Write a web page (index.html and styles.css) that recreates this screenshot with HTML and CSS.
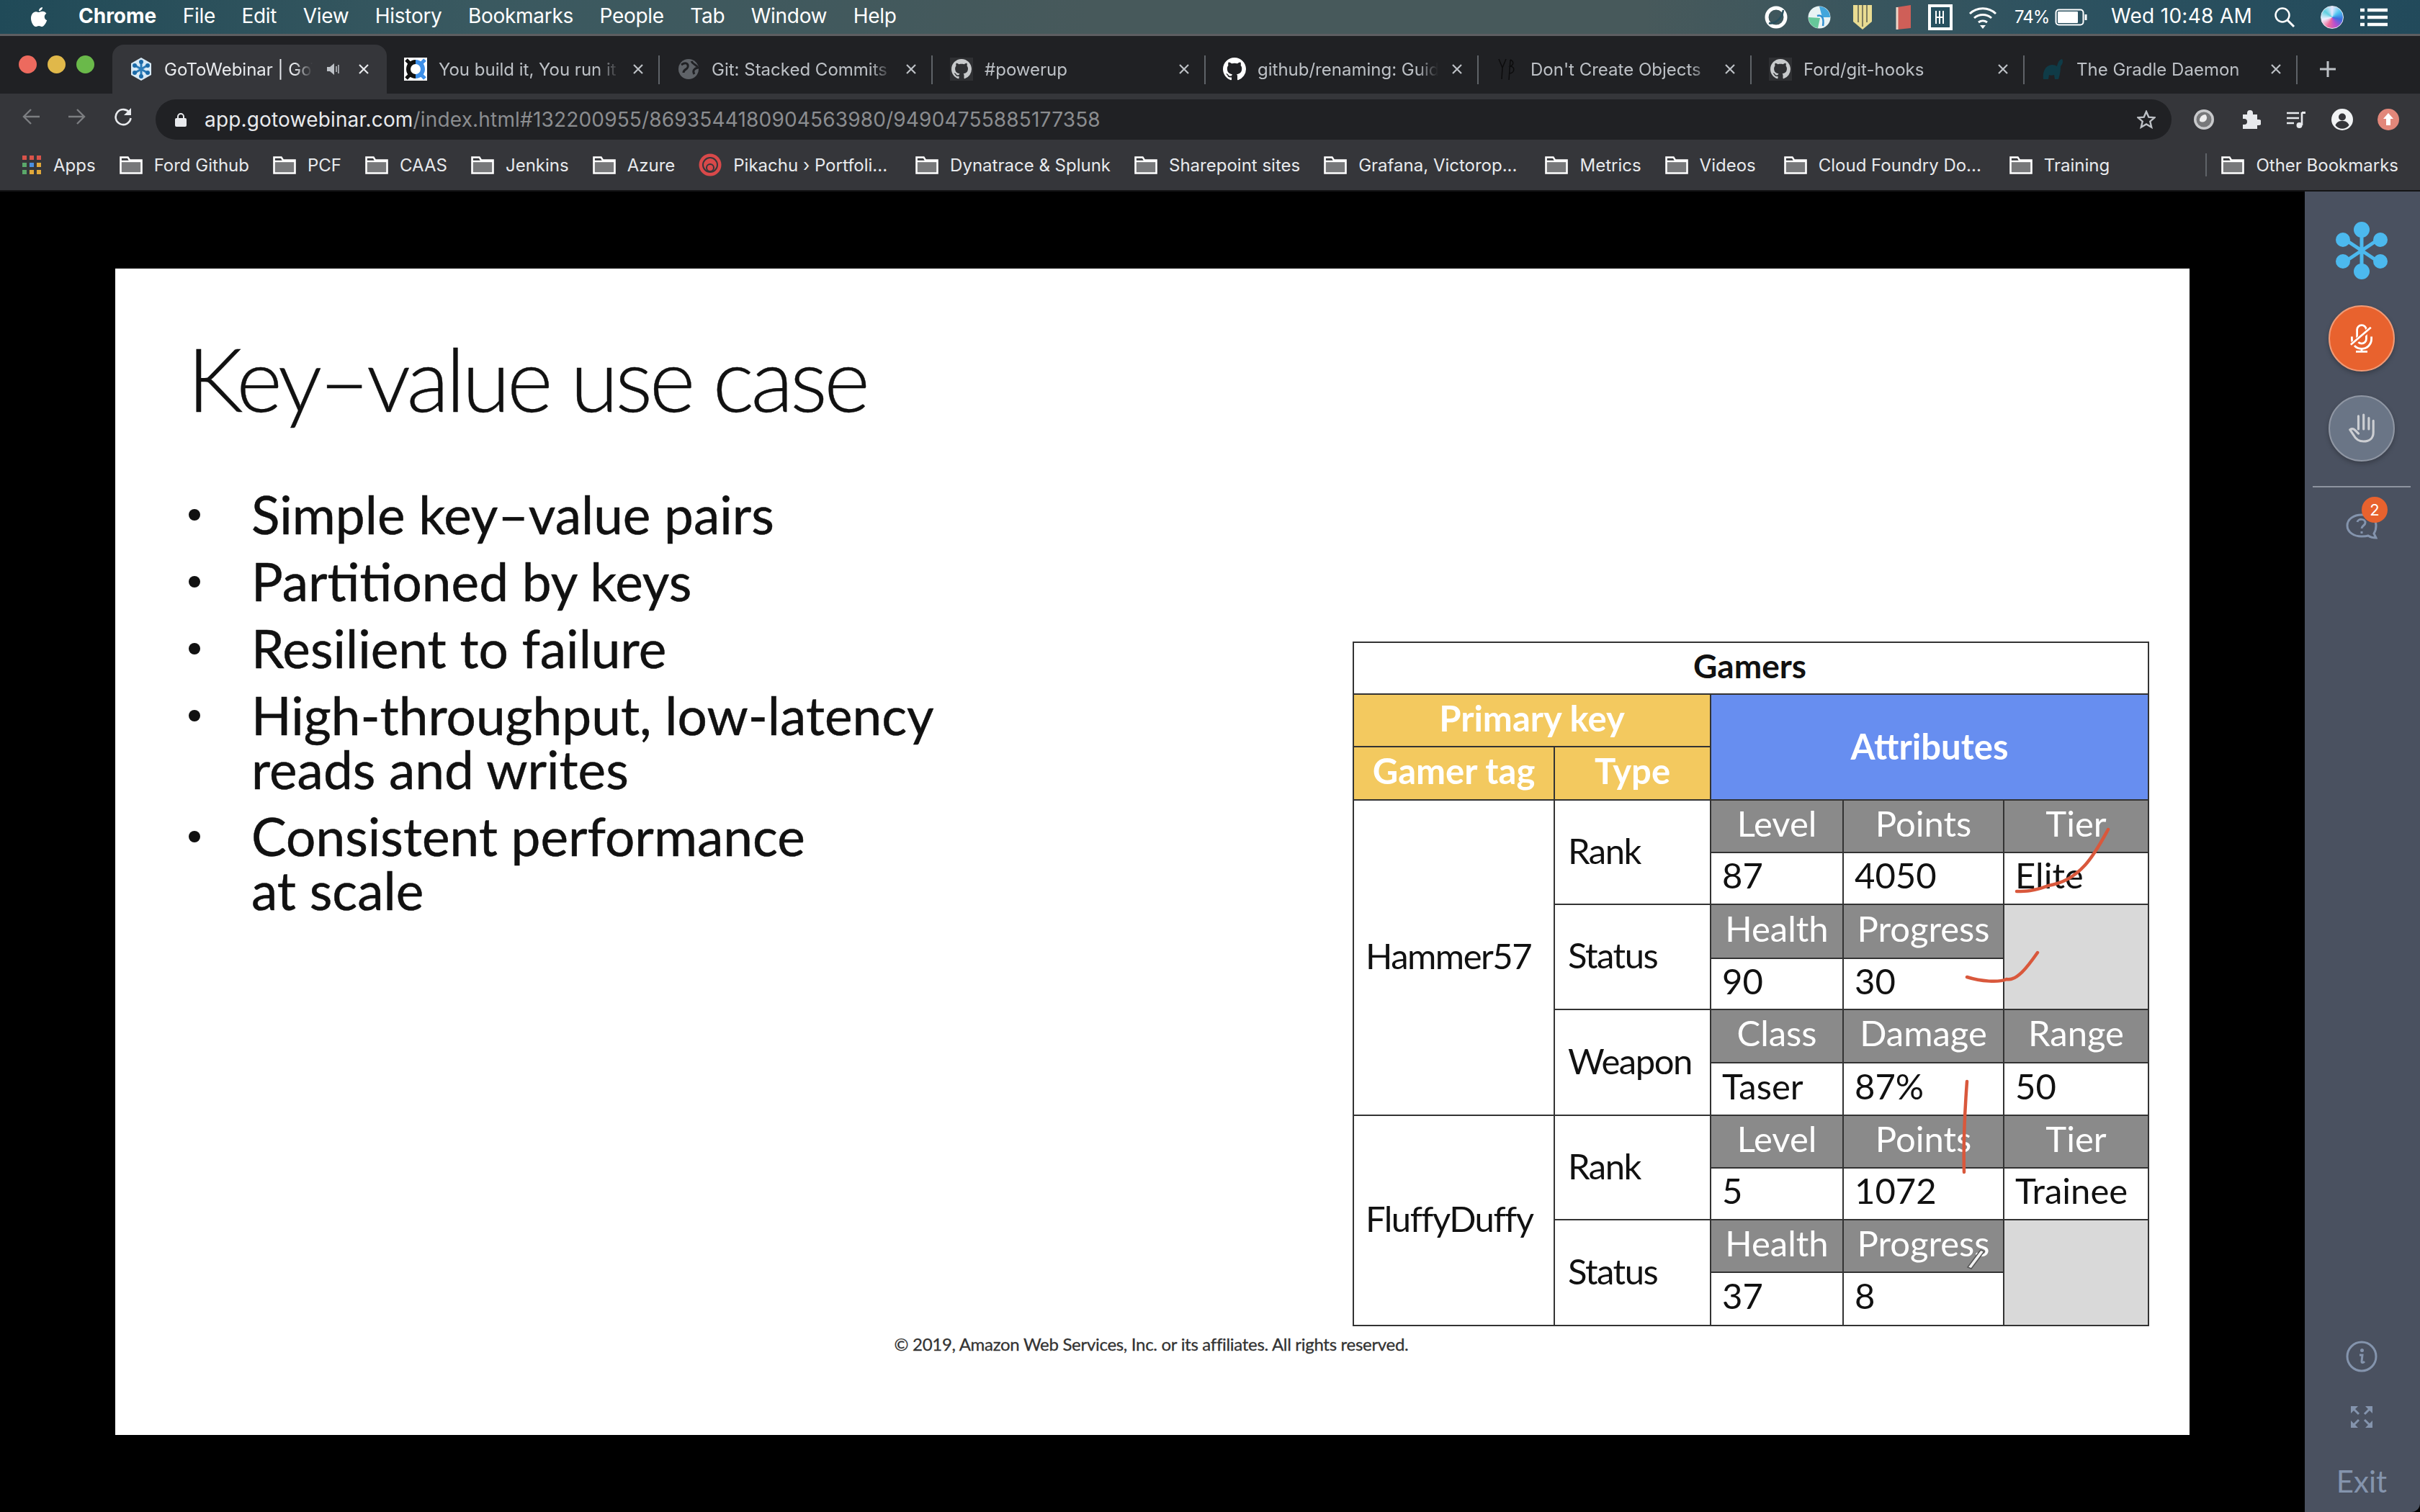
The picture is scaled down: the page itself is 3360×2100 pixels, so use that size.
FILE: index.html
```html
<!DOCTYPE html>
<html lang="en">
<head>
  <meta charset="UTF-8">
  <title>GoToWebinar</title>
  <link rel="stylesheet" href="styles.css">
</head>
<body>
  <svg class="defs" width="0" height="0">
    <symbol id="folder" viewBox="0 0 32 25">
      <path d="M1.500 23.500V1.500h10l2.500 4h16.500v18z" fill="#77787a" stroke="#fff" stroke-width="2.600"/>
      <path d="M3 3h8l1.500 3H3z" fill="#35363a"/>
      <path d="M2 7h28" stroke="#fff" stroke-width="2.400"/>
    </symbol>
    <symbol id="close" viewBox="0 0 16 16">
      <path d="M2 2l12 12M14 2L2 14" stroke="currentColor" stroke-width="2.200" fill="none"/>
    </symbol>
    <symbol id="github" viewBox="0 0 16 16">
      <path fill="currentColor" d="M8 0C3.580 0 0 3.580 0 8c0 3.540 2.290 6.530 5.470 7.590.4.070.55-.17.55-.38 0-.19-.01-.82-.01-1.490-2.010.37-2.530-.49-2.690-.94-.09-.23-.48-.94-.82-1.130-.28-.15-.68-.52-.01-.53.63-.01 1.080.58 1.230.82.72 1.210 1.870.87 2.330.66.07-.52.28-.87.51-1.070-1.780-.2-3.640-.89-3.640-3.950 0-.87.31-1.590.82-2.150-.08-.2-.36-1.020.08-2.120 0 0 .67-.21 2.200.82.64-.18 1.320-.27 2-.27s1.360.09 2 .27c1.530-1.040 2.200-.82 2.200-.82.44 1.100.16 1.920.08 2.120.51.56.82 1.270.82 2.150 0 3.070-1.870 3.750-3.650 3.950.29.25.54.73.54 1.480 0 1.070-.01 1.930-.01 2.200 0 .21.15.46.55.38A8.010 8.010 0 0 0 16 8c0-4.420-3.580-8-8-8z"/>
    </symbol>
  </svg>

  <div class="menubar">
    <svg class="apple" viewBox="0 0 24 30"><path fill="#fff" d="M17 1c.2 2.600-2.300 5.500-5 5.300C11.700 3.700 14.400 1.200 17 1zM12 8c1.300 0 2.800-1.200 5-1.200 2.200 0 4.200 1.100 5.400 3-3.900 2.300-3.300 7.900.8 9.500-1.200 3.200-4 8.700-6.800 8.700-1.700 0-2.400-1.100-4.400-1.100s-2.800 1.100-4.400 1.100C4.500 28 1 21.500 1 16.400 1 11 4.200 7.200 8 7.200c1.600 0 3 .8 4 .8z"/></svg>
    <nav class="menu">
      <b>Chrome</b><span>File</span><span>Edit</span><span>View</span><span>History</span><span>Bookmarks</span><span>People</span><span>Tab</span><span>Window</span><span>Help</span>
    </nav>
    <div class="status">
      <svg class="st" width="32" height="32" viewBox="0 0 32 32"><circle cx="16" cy="16" r="13" fill="none" stroke="#fff" stroke-width="5"/><path d="M6 24C12 26 24 20 26 6" fill="none" stroke="#27505f" stroke-width="2.500"/></svg>
      <svg class="st gap-30" width="32" height="32" viewBox="0 0 32 32"><circle cx="16" cy="16" r="15.500" fill="#e9f3f4"/><path d="M16 1a15 15 0 0 1 15 15H20z" fill="#43a6dc"/><path d="M1 16a15 15 0 0 0 13 15l3-14z" fill="#66c79a"/><path d="M13 14c6-2 10 2 8 14" fill="none" stroke="#2f8fd0" stroke-width="2.500"/></svg>
      <svg class="st gap-30" width="28" height="34" viewBox="0 0 28 34"><path d="M1 0h26v23L14 34 1 23z" fill="#e9dc92"/><path d="M8 0v24M14 0v30M20 0v24" stroke="#7f7d5e" stroke-width="2"/></svg>
      <svg class="st gap-23" width="24" height="38" viewBox="0 0 24 38"><path d="M4 5l19-3v32L4 36z" fill="#cf5f58"/><path d="M4 5v31" stroke="#ecd6c8" stroke-width="3"/></svg>
      <svg class="st gap-22" width="34" height="36" viewBox="0 0 34 36"><rect x="2" y="2" width="30" height="32" fill="#27505f" stroke="#fff" stroke-width="4"/><path d="M11 9v18M21 9v18M11 18h10M16 9v18" stroke="#fff" stroke-width="2"/></svg>
      <svg class="st gap-24" width="40" height="34" viewBox="0 0 40 34"><path d="M2 12a26 26 0 0 1 36 0M8 18a18 18 0 0 1 24 0M14 24a10 10 0 0 1 12 0" fill="none" stroke="#fff" stroke-width="3"/><path d="M16 28h8l-4 5z" fill="#fff"/></svg>
      <span class="pct">74%</span>
      <svg class="st battery" width="46" height="24" viewBox="0 0 46 24"><rect x="1.500" y="1.500" width="38" height="21" rx="4" fill="none" stroke="#fff" stroke-width="2"/><rect x="4" y="4" width="28" height="16" rx="1" fill="#fff"/><path d="M43 8v8" stroke="#fff" stroke-width="3"/></svg>
      <span class="clock">Wed 10:48 AM</span>
      <svg class="st gap-35" width="30" height="30" viewBox="0 0 30 30"><circle cx="12" cy="12" r="9.500" fill="none" stroke="#fff" stroke-width="2.500"/><path d="M19 19l9 9" stroke="#fff" stroke-width="3"/></svg>
      <span class="siri"></span>
      <svg class="st last" width="38" height="26" viewBox="0 0 38 26"><path d="M0 3h6M10 3h28M0 13h6M10 13h28M0 23h6M10 23h28" stroke="#fff" stroke-width="4.500"/></svg>
    </div>
  </div>

  <div class="window">
    <div class="tabstrip">
      <div class="lights"><i class="red"></i><i class="yellow"></i><i class="green"></i></div>
      <div class="tab active">
        <svg class="favicon" viewBox="0 0 32 32"><path d="M16 0l14 8v16l-14 8-14-8V8z" fill="#d7e9f5"/><path d="M16 5v22M6 10l20 12M26 10L6 22" stroke="#2c7cb8" stroke-width="3"/><g fill="#1b6aa8"><circle cx="16" cy="6" r="3"/><circle cx="16" cy="26" r="3"/><circle cx="7" cy="11" r="3"/><circle cx="25" cy="11" r="3"/><circle cx="7" cy="21" r="3"/><circle cx="25" cy="21" r="3"/></g></svg>
        <span class="tab-title short">GoToWebinar | GoT</span>
        <svg class="speaker" viewBox="0 0 20 20"><path d="M1 7h4l6-5v16l-6-5H1z" fill="#bdc1c6"/><path d="M14 6v8M17 4v12" stroke="#bdc1c6" stroke-width="1.500"/></svg>
        <svg class="tab-x"><use href="#close"/></svg>
      </div>
      <div class="tab">
        <svg class="favicon" viewBox="0 0 32 32"><rect width="32" height="32" fill="#fff"/><path d="M16 3a13 13 0 0 0 0 26v-6a7 7 0 0 1 0-14z" fill="#111"/><path d="M16 3a13 13 0 0 1 0 26v-6a7 7 0 0 0 0-14z" fill="#3d8fe8"/><path d="M3 3l5 5M3 29l5-5" stroke="#111" stroke-width="5"/><path d="M29 3l-5 5M29 29l-5-5" stroke="#3d8fe8" stroke-width="5"/></svg>
        <span class="tab-title">You build it, You run it</span>
        <svg class="tab-x"><use href="#close"/></svg>
      </div>
      <div class="tab">
        <svg class="favicon" viewBox="0 0 32 32"><circle cx="16" cy="16" r="14" fill="#5f6368"/><path d="M6 10c6-4 10-2 9 3-1 4-6 3-6 8M20 5c2 5 8 5 9 9-5 1-8 4-5 9" fill="none" stroke="#202124" stroke-width="3"/></svg>
        <span class="tab-title">Git: Stacked Commits</span>
        <svg class="tab-x"><use href="#close"/></svg>
      </div>
      <div class="tab">
        <span class="favicon gh-box"><svg><use href="#github"/></svg></span>
        <span class="tab-title">#powerup</span>
        <svg class="tab-x"><use href="#close"/></svg>
      </div>
      <div class="tab">
        <svg class="favicon gh-white"><use href="#github"/></svg>
        <span class="tab-title">github/renaming: Guid</span>
        <svg class="tab-x"><use href="#close"/></svg>
      </div>
      <div class="tab">
        <svg class="favicon" viewBox="0 0 32 32"><path d="M4 2l5 12 5-12M9 14l-1 16M20 3c5 2 5 7 0 9 7 1 6 9-1 10M20 3l-2 28" fill="none" stroke="#0c0c0d" stroke-width="1.500"/></svg>
        <span class="tab-title">Don't Create Objects</span>
        <svg class="tab-x"><use href="#close"/></svg>
      </div>
      <div class="tab">
        <span class="favicon gh-box"><svg><use href="#github"/></svg></span>
        <span class="tab-title">Ford/git-hooks</span>
        <svg class="tab-x"><use href="#close"/></svg>
      </div>
      <div class="tab">
        <svg class="favicon" viewBox="0 0 32 32"><path d="M2 30c-1-8 1-16 8-19 4-2 8-1 11 1 1-5 3-9 7-10 2 3 1 7-2 10 0 6-1 12-3 18h-5l-1-6c-3 1-5 1-7 0l-1 6z" fill="#0f3b47"/></svg>
        <span class="tab-title">The Gradle Daemon</span>
        <svg class="tab-x"><use href="#close"/></svg>
      </div>
      <svg class="newtab" viewBox="0 0 24 24"><path d="M12 1v22M1 12h22" stroke="#bdc1c6" stroke-width="3"/></svg>
    </div>

    <div class="toolbar">
      <svg class="nav" viewBox="0 0 26 26"><path d="M25 13H3M13 3L3 13l10 10" fill="none" stroke="#7c7e81" stroke-width="2.400"/></svg>
      <svg class="nav" viewBox="0 0 26 26"><path d="M1 13h22M13 3l10 10-10 10" fill="none" stroke="#7c7e81" stroke-width="2.400"/></svg>
      <svg class="nav" viewBox="0 0 26 26"><path d="M22 8a10.500 10.500 0 1 0 1.500 7" fill="none" stroke="#e8eaed" stroke-width="2.600"/><path d="M24 1v10H14z" fill="#e8eaed"/></svg>
      <div class="omnibox">
        <svg class="lock" viewBox="0 0 16 20"><path d="M4 9V6a4 4 0 0 1 8 0v3" fill="none" stroke="#e8eaed" stroke-width="2"/><rect y="8" width="16" height="12" rx="2" fill="#e8eaed"/></svg>
        <span class="url"><span class="host">app.gotowebinar.com</span>/index.html#132200955/8693544180904563980/94904755885177358</span>
        <svg class="star" viewBox="0 0 26 26"><path d="M13 2l3.300 7.600 8.200.7-6.200 5.400 1.900 8L13 19.500 5.800 23.700l1.900-8L1.500 10.300l8.200-.7z" fill="none" stroke="#bdc1c6" stroke-width="2.400"/></svg>
      </div>
      <div class="extensions">
        <svg class="ext" viewBox="0 0 30 30"><circle cx="15" cy="15" r="14" fill="#c8c9cb"/><circle cx="15" cy="15" r="10.500" fill="#77787a"/><path d="M9 17a8 8 0 0 1 8-9 6 6 0 0 1-8 9z" fill="#eee"/></svg>
        <svg class="ext" viewBox="0 0 30 30"><path d="M5 8h6V6a4 4 0 0 1 8 0v2h6v7h2a4 4 0 0 1 0 8h-2v5H5v-6h2a4 4 0 0 0 0-8H5z" fill="#e8eaed"/></svg>
        <svg class="ext" viewBox="0 0 30 30"><path d="M2 6h17M2 13h17M2 20h10" stroke="#e8eaed" stroke-width="2.600"/><path d="M23 5v18" stroke="#e8eaed" stroke-width="2.600"/><path d="M23 4h5v3h-5z" fill="#e8eaed"/><circle cx="19.500" cy="23" r="4" fill="#e8eaed"/></svg>
        <svg class="ext" viewBox="0 0 30 30"><circle cx="15" cy="15" r="15" fill="#f1f3f4"/><circle cx="15" cy="11.500" r="5" fill="#35363a"/><path d="M5.500 23c2-5 5-6 9.500-6s7.500 1 9.500 6a12 12 0 0 1-19 0z" fill="#35363a"/></svg>
        <svg class="ext" viewBox="0 0 30 30"><circle cx="15" cy="15" r="15" fill="#e2877a"/><path d="M15 6l7 8h-4v9h-6v-9H8z" fill="#fff"/></svg>
      </div>
    </div>

    <div class="bookmarks">
      <div class="bm">
        <span class="apps"><i></i><i></i><i></i><i></i><i></i><i></i><i></i><i></i><i></i></span>
        <span>Apps</span>
      </div>
      <div class="bm"><svg class="folder"><use href="#folder"/></svg><span>Ford Github</span></div>
      <div class="bm"><svg class="folder"><use href="#folder"/></svg><span>PCF</span></div>
      <div class="bm"><svg class="folder"><use href="#folder"/></svg><span>CAAS</span></div>
      <div class="bm"><svg class="folder"><use href="#folder"/></svg><span>Jenkins</span></div>
      <div class="bm"><svg class="folder"><use href="#folder"/></svg><span>Azure</span></div>
      <div class="bm wide-after">
        <svg class="pika" viewBox="0 0 32 32"><circle cx="16" cy="16" r="15.500" fill="#d9494a"/><circle cx="16" cy="16" r="10" fill="none" stroke="#35363a" stroke-width="2"/><circle cx="16" cy="20" r="5" fill="none" stroke="#35363a" stroke-width="2"/></svg>
        <span>Pikachu › Portfoli...</span>
      </div>
      <div class="bm"><svg class="folder"><use href="#folder"/></svg><span>Dynatrace &amp; Splunk</span></div>
      <div class="bm"><svg class="folder"><use href="#folder"/></svg><span>Sharepoint sites</span></div>
      <div class="bm wide-after"><svg class="folder"><use href="#folder"/></svg><span>Grafana, Victorop...</span></div>
      <div class="bm"><svg class="folder"><use href="#folder"/></svg><span>Metrics</span></div>
      <div class="bm wide-after"><svg class="folder"><use href="#folder"/></svg><span>Videos</span></div>
      <div class="bm wide-after"><svg class="folder"><use href="#folder"/></svg><span>Cloud Foundry Do...</span></div>
      <div class="bm"><svg class="folder"><use href="#folder"/></svg><span>Training</span></div>
      <div class="bm other"><svg class="folder"><use href="#folder"/></svg><span>Other Bookmarks</span></div>
    </div>

    <div class="content">
      <div class="stage">
        <div class="slide">
          <div class="slide-main">
            <div class="slide-text">
              <h1>Key–value use case</h1>
              <ul>
                <li><span>Simple key–value pairs</span></li>
                <li><span>Partitioned by keys</span></li>
                <li><span>Resilient to failure</span></li>
                <li><span>High-throughput, low-latency<br>reads and writes</span></li>
                <li><span>Consistent performance<br>at scale</span></li>
              </ul>
            </div>
            <div class="gamers">
              <div class="cell title-cell">Gamers</div>
              <div class="cell key pk">Primary key</div>
              <div class="cell attrs">Attributes</div>
              <div class="cell key">Gamer tag</div>
              <div class="cell key">Type</div>

              <div class="cell name hammer">Hammer57</div>
              <div class="cell kind">Rank</div>
              <div class="cell head">Level</div><div class="cell head">Points</div><div class="cell head">Tier</div>
              <div class="cell val">87</div><div class="cell val">4050</div><div class="cell val">Elite</div>
              <div class="cell kind">Status</div>
              <div class="cell head">Health</div><div class="cell head">Progress</div><div class="cell blank"></div>
              <div class="cell val">90</div><div class="cell val">30</div>
              <div class="cell kind">Weapon</div>
              <div class="cell head">Class</div><div class="cell head">Damage</div><div class="cell head">Range</div>
              <div class="cell val">Taser</div><div class="cell val">87%</div><div class="cell val">50</div>

              <div class="cell name fluffy">FluffyDuffy</div>
              <div class="cell kind">Rank</div>
              <div class="cell head">Level</div><div class="cell head">Points</div><div class="cell head">Tier</div>
              <div class="cell val">5</div><div class="cell val">1072</div><div class="cell val">Trainee</div>
              <div class="cell kind">Status</div>
              <div class="cell head">Health</div><div class="cell head">Progress</div><div class="cell blank"></div>
              <div class="cell val">37</div><div class="cell val">8</div>

              <!-- presenter's ink on top of the slide -->
              <svg class="ink" viewBox="0 0 1106 949">
                <path d="M1047 259C1030 290 1010 330 964 337C945 345 930 345 920 345"/>
                <path d="M949 430C935 450 920 470 906 467C895 472 870 470 851 464"/>
                <path d="M851 609C848 650 846 700 847 735"/>
                <path d="M870 843l-18 24 5 2 18-24z" class="pencil"/>
              </svg>
            </div>
          </div>
          <p class="copyright">© 2019, Amazon Web Services, Inc. or its affiliates. All rights reserved.</p>
        </div>
      </div>

      <aside class="sidebar">
        <svg class="logo" viewBox="0 0 72 80"><g stroke="#4cb9ee" stroke-width="5"><path d="M36 12v56M12 24l48 32M60 24L12 56"/></g><g fill="#4cb9ee"><circle cx="36" cy="11" r="11"/><circle cx="36" cy="69" r="11"/><circle cx="10" cy="25" r="10"/><circle cx="62" cy="25" r="10"/><circle cx="10" cy="55" r="10"/><circle cx="62" cy="55" r="10"/></g></svg>
        <div class="round mic">
          <svg viewBox="0 0 40 50"><g fill="none" stroke="#fff" stroke-width="3.500"><path d="M12 26V10a8 8 0 0 1 16 0v16a8 8 0 0 1-16 0z"/><path d="M3 22v4a17 17 0 0 0 34 0v-4"/><path d="M20 43v5M10 48h20"/></g><path d="M2 37L37 6" stroke="#e8622e" stroke-width="8"/><path d="M1 36L36 6" stroke="#fff" stroke-width="3.500"/></svg>
        </div>
        <div class="round hand">
          <svg viewBox="0 0 40 46"><path d="M15 24V4M23 24V2M31 24V7M38 24v-13v18c0 9-6 14-15 14-7 0-12-3-15-9l-6-9c3-2 6-1 8 1l5 5" fill="none" stroke="#ccced2" stroke-width="3.500" stroke-linecap="round" stroke-linejoin="round"/></svg>
        </div>
        <hr class="divider">
        <div class="qa">
          <svg viewBox="0 0 44 40"><path d="M22 2C11 2 2 8 2 17s9 15 20 15c3 0 6 0 9-1 3 2 7 3 11 3l-3-6c2-3 3-6 3-11C42 8 33 2 22 2z" fill="none" stroke="#8494ad" stroke-width="3"/><path d="M16 12c1-5 11-5 11 1 0 4-5 4-5 8M22 25v3" fill="none" stroke="#8494ad" stroke-width="3"/></svg>
          <span class="badge">2</span>
        </div>
        <svg class="info" viewBox="0 0 44 44"><circle cx="22" cy="22" r="20" fill="none" stroke="#8494ad" stroke-width="3"/><circle cx="22.500" cy="13.500" r="2.500" fill="#8494ad"/><path d="M19 20h4l-1 9c0 2 2 2 4 0" fill="none" stroke="#8494ad" stroke-width="3"/></svg>
        <svg class="expand" viewBox="0 0 30 30"><g fill="#8494ad"><path d="M0 0h10L0 10zM30 0v10L20 0zM0 30V20l10 10zM30 30H20l10-10z"/></g><path d="M3 3l8 8M27 3l-8 8M3 27l8-8M27 27l-8-8" stroke="#8494ad" stroke-width="3"/></svg>
        <span class="exit">Exit</span>
      </aside>
    </div>
  </div>
</body>
</html>
```

FILE: styles.css
```css
* {
  box-sizing: border-box;
}

html, body {
  margin: 0;
  padding: 0;
  width: 3360px;
  height: 2100px;
  overflow: hidden;
  background: #000;
  font-family: Inter, Roboto, "Liberation Sans", sans-serif;
}

.defs {
  position: absolute;
}

/* mac menu bar */
.menubar {
  height: 47px;
  display: flex;
  align-items: center;
  padding-left: 42px;
  color: #fff;
  font-size: 28px;
  background: linear-gradient(90deg, #204a58 0%, #3a5960 20%, #47595b 45%, #47595b 68%, #2d5260 85%, #224a5b 100%);
}

.apple {
  width: 24px;
  height: 30px;
  margin-right: 43px;
}

.menu {
  display: flex;
  gap: 36.500px;
  padding-bottom: 3px;
}

.menu span {
  letter-spacing: -0.300px;
}

.menu b {
  font-weight: 700;
}

.status {
  margin-left: auto;
  display: flex;
  align-items: center;
  height: 47px;
  padding-right: 45px;
}

.st {
  flex: none;
  margin-right: 28px;
}

.gap-22 { margin-right: 22px; }
.gap-23 { margin-right: 23px; }
.gap-24 { margin-right: 24px; }
.gap-30 { margin-right: 30px; }
.gap-35 { margin-right: 35px; }

.st.last {
  margin-right: 0;
}

.pct {
  width: 46px;
  font-size: 24px;
  letter-spacing: -1px;
  white-space: nowrap;
  margin-right: 10px;
}

.battery {
  margin-right: 32px;
}

.clock {
  width: 188px;
  white-space: nowrap;
  letter-spacing: 0.300px;
  margin-right: 38px;
  padding-bottom: 3px;
}

.siri {
  width: 32px;
  height: 32px;
  margin-right: 23px;
  border-radius: 50%;
  border: 1px solid #e8e8f0;
  background: conic-gradient(#e8e8ff, #52c8f0, #3b6fe0, #b44fd0, #f06a9a, #f0f0ff, #5fd0e0, #e8e8ff);
}

/* browser window */
.window {
  height: 2053px;
  display: flex;
  flex-direction: column;
  border-top: 3px solid #5d5e61;
  background: #000;
}

.tabstrip {
  height: 80px;
  padding-top: 12px;
  display: flex;
  background: #202124;
  color: #bdc1c6;
  font-size: 24px;
}

.lights {
  width: 156px;
  display: flex;
  align-items: center;
  gap: 15px;
  padding: 0 0 14px 26px;
}

.lights i {
  width: 25px;
  height: 25px;
  border-radius: 50%;
}

.lights .red { background: #ed6a5e; }
.lights .yellow { background: #e0b84a; }
.lights .green { background: #6ab94a; }

.tab {
  flex: none;
  width: 379px;
  height: 68px;
  position: relative;
  display: flex;
  align-items: center;
  padding: 0 22px 0 24px;
}

.tab::after {
  content: "";
  position: absolute;
  right: 0;
  top: 15px;
  height: 40px;
  border-right: 2px solid #5f6368;
}

.tab.active {
  width: 381px;
  background: #35363a;
  color: #e8eaed;
  border-radius: 16px 16px 0 0;
}

.tab.active::after {
  display: none;
}

.favicon {
  flex: none;
  width: 32px;
  height: 32px;
  margin-right: 16px;
}

.gh-white {
  color: #fff;
}

.gh-box {
  display: flex;
  align-items: center;
  justify-content: center;
  background: #2f3033;
  color: #c8cacc;
}

.gh-box svg {
  width: 28px;
  height: 28px;
}

.tab-title {
  flex: 1;
  min-width: 0;
  white-space: nowrap;
  overflow: hidden;
  -webkit-mask-image: linear-gradient(90deg, #000 88%, transparent 100%);
  mask-image: linear-gradient(90deg, #000 88%, transparent 100%);
}

.tab-title.short {
  flex: none;
  width: 206px;
}

.speaker {
  width: 20px;
  height: 20px;
  margin-left: 19px;
}

.tab-x {
  flex: none;
  width: 16px;
  height: 16px;
  margin-left: 18px;
}

.tab.active .speaker + .tab-x {
  margin-left: 24px;
}

.newtab {
  width: 24px;
  height: 24px;
  margin: 22px 0 0 30px;
}

.toolbar {
  height: 64px;
  background: #35363a;
  display: flex;
  align-items: center;
  padding-left: 30px;
}

.nav {
  flex: none;
  width: 26px;
  height: 26px;
  margin-right: 38px;
}

.omnibox {
  flex: none;
  width: 2799px;
  height: 56px;
  margin: 8px 0 0 -6px;
  border-radius: 28px;
  background: #202124;
  display: flex;
  align-items: center;
  padding: 0 22px 0 27px;
  color: #8b8d90;
  font-size: 28px;
}

.lock {
  width: 16px;
  height: 20px;
  margin-right: 25px;
}

.url {
  letter-spacing: 0.170px;
}

.host {
  color: #e8eaed;
}

.star {
  width: 26px;
  height: 26px;
  margin-left: auto;
}

.extensions {
  display: flex;
  align-items: center;
  gap: 34px;
  margin: 8px 0 0 30px;
}

.ext {
  width: 30px;
  height: 30px;
}

.bookmarks {
  height: 72px;
  background: #35363a;
  border-bottom: 2px solid #141416;
  display: flex;
  align-items: center;
  padding-left: 31px;
  gap: 33px;
  color: #e8eaed;
  font-size: 24px;
}

.bm {
  display: flex;
  align-items: center;
  gap: 16px;
  white-space: nowrap;
}

.bm.wide-after {
  margin-right: 6px;
}

.folder {
  width: 32px;
  height: 25px;
}

.apps {
  width: 26px;
  height: 26px;
  margin-right: 1px;
  display: grid;
  grid-template-columns: repeat(3, 6px);
  grid-template-rows: repeat(3, 6px);
  gap: 4px;
}

.apps i:nth-child(1), .apps i:nth-child(2), .apps i:nth-child(3) { background: #d9534a; }
.apps i:nth-child(4) { background: #5aa86a; }
.apps i:nth-child(5) { background: #4a8fe0; }
.apps i:nth-child(6) { background: #e0a83a; }
.apps i:nth-child(7) { background: #5aa86a; }
.apps i:nth-child(8), .apps i:nth-child(9) { background: #e0a83a; }

.pika {
  width: 32px;
  height: 32px;
}

.other {
  margin-left: auto;
  margin-right: 30px;
  padding-left: 20px;
  height: 32px;
  border-left: 2px solid #5f6368;
}

/* webinar viewer */
.content {
  flex: 1;
  min-height: 0;
  display: flex;
}

.stage {
  flex: 1;
  padding: 107px 0 0 160px;
  background: #000;
}

.slide {
  width: 2880px;
  height: 1620px;
  background: #fff;
  color: #111;
  font-family: Lato, "Noto Sans", sans-serif;
  padding: 0 56px 0 101px;
  display: flex;
  flex-direction: column;
}

.slide-main {
  height: 1469px;
  display: flex;
  justify-content: space-between;
}

h1 {
  margin: 77px 0 0 -1px;
  font-size: 122px;
  line-height: 150px;
  font-weight: 300;
  letter-spacing: -4.500px;
  -webkit-text-stroke: 0.400px #111;
}

ul {
  margin: 77px 0 0;
  padding: 0;
  list-style: none;
  font-size: 73px;
  line-height: 75px;
  -webkit-text-stroke: 0.500px #111;
}

li {
  display: flex;
  margin-bottom: 18px;
}

li::before {
  content: "";
  flex: none;
  width: 16px;
  height: 16px;
  margin: 30px 71px 0 1px;
  border-radius: 50%;
  background: #111;
}

/* Gamers table */
.gamers {
  position: relative;
  align-self: flex-end;
  width: 1106px;
  display: grid;
  grid-template-columns: 279px 217px 184px 223px 201px;
  grid-template-rows: 72px 73px 74px 73px 72px 75px 71px 74px 73px 73px 72px 73px 74px;
  border-top: 2px solid #333;
  border-left: 2px solid #333;
  font-size: 49px;
}

.cell {
  display: flex;
  align-items: center;
  padding: 0 0 10px 15px;
  border-right: 2px solid #333;
  border-bottom: 2px solid #333;
  white-space: nowrap;
}

.title-cell {
  grid-column: span 5;
  justify-content: center;
  padding: 0 3px 8px 0;
  font-weight: 700;
  font-size: 46px;
}

.key {
  background: #f3c95f;
  color: #fff;
  justify-content: center;
  padding: 0 0 8px;
  font-weight: 700;
}

.pk {
  grid-column: span 2;
}

.attrs {
  grid-column: span 3;
  grid-row: span 2;
  background: #678ef0;
  color: #fff;
  justify-content: center;
  padding: 0 0 4px;
  font-weight: 700;
}

.name {
  padding: 0 0 6px 16px;
  letter-spacing: -1.500px;
}

.hammer {
  grid-row: span 6;
}

.fluffy {
  grid-row: span 4;
}

.kind {
  grid-row: span 2;
  padding: 0 0 6px 18px;
  letter-spacing: -1.500px;
}

.head {
  background: #8a8a8a;
  color: #fff;
  justify-content: center;
  padding-left: 0;
}

.blank {
  grid-row: span 2;
  background: #d9d9d9;
}

.ink {
  position: absolute;
  left: 0;
  top: 0;
  width: 1106px;
  height: 949px;
  fill: none;
  stroke: #d9583c;
  stroke-width: 4.500;
  stroke-linecap: round;
  pointer-events: none;
}

.ink .pencil {
  fill: #f2f2f2;
  stroke: #555;
  stroke-width: 1.500;
}

.copyright {
  margin: 10px 48px 0 0;
  text-align: center;
  font-size: 24px;
  letter-spacing: -0.300px;
  color: #333;
  -webkit-text-stroke: 0.300px #333;
}

/* right hand panel */
.sidebar {
  flex: none;
  width: 160px;
  padding-right: 2px;
  background: #4a5160;
  border-bottom-right-radius: 12px;
  display: flex;
  flex-direction: column;
  align-items: center;
  color: #8494ad;
}

.logo {
  width: 72px;
  height: 80px;
  margin-top: 42px;
}

.round {
  width: 92px;
  height: 92px;
  border-radius: 50%;
  display: flex;
  align-items: center;
  justify-content: center;
  box-shadow: 0 3px 6px rgba(0, 0, 0, 0.25);
}

.mic {
  margin-top: 36px;
  background: #e8622e;
  border: 2px solid #f09a76;
}

.mic svg {
  width: 32px;
  height: 44px;
}

.hand {
  margin-top: 33px;
  background: #6a7586;
  border: 2px solid #8f96a3;
}

.hand svg {
  width: 36px;
  height: 44px;
}

.divider {
  width: 136px;
  margin: 34px 0 0;
  border: 0;
  border-top: 2px solid #8e94a0;
}

.qa {
  position: relative;
  width: 44px;
  height: 40px;
  margin-top: 36px;
}

.qa svg {
  width: 44px;
  height: 40px;
}

.badge {
  position: absolute;
  left: 22px;
  top: -23px;
  width: 36px;
  height: 36px;
  border-radius: 50%;
  background: #e8622e;
  color: #fff;
  font-size: 22px;
  display: flex;
  align-items: center;
  justify-content: center;
}

.info {
  width: 44px;
  height: 44px;
  margin-top: auto;
}

.expand {
  width: 30px;
  height: 30px;
  margin-top: 47px;
}

.exit {
  margin: 49px 0 18px;
  font-family: Lato, sans-serif;
  font-size: 42px;
  line-height: 50px;
}
```
